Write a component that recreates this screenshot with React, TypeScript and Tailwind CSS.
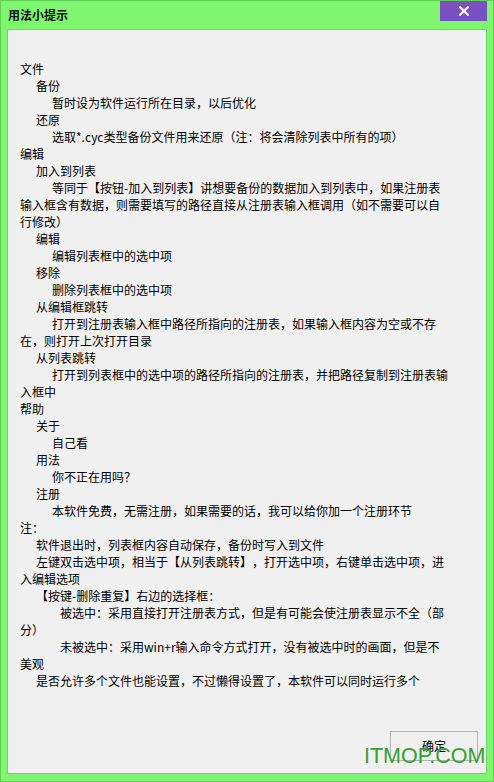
import React from "react";

type Line = { t: string; i: 0 | 1 | 2 | 3 };

const lines: Line[] = [
  { t: "文件", i: 0 },
  { t: "备份", i: 1 },
  { t: "暂时设为软件运行所在目录，以后优化", i: 2 },
  { t: "还原", i: 1 },
  { t: "选取*.cyc类型备份文件用来还原（注：将会清除列表中所有的项）", i: 2 },
  { t: "编辑", i: 0 },
  { t: "加入到列表", i: 1 },
  {
    t: "等同于【按钮-加入到列表】讲想要备份的数据加入到列表中，如果注册表输入框含有数据，则需要填写的路径直接从注册表输入框调用（如不需要可以自行修改）",
    i: 2,
  },
  { t: "编辑", i: 1 },
  { t: "编辑列表框中的选中项", i: 2 },
  { t: "移除", i: 1 },
  { t: "删除列表框中的选中项", i: 2 },
  { t: "从编辑框跳转", i: 1 },
  { t: "打开到注册表输入框中路径所指向的注册表，如果输入框内容为空或不存在，则打开上次打开目录", i: 2 },
  { t: "从列表跳转", i: 1 },
  { t: "打开到列表框中的选中项的路径所指向的注册表，并把路径复制到注册表输入框中", i: 2 },
  { t: "帮助", i: 0 },
  { t: "关于", i: 1 },
  { t: "自己看", i: 2 },
  { t: "用法", i: 1 },
  { t: "你不正在用吗？", i: 2 },
  { t: "注册", i: 1 },
  { t: "本软件免费，无需注册，如果需要的话，我可以给你加一个注册环节", i: 2 },
  { t: "注：", i: 0 },
  { t: "软件退出时，列表框内容自动保存，备份时写入到文件", i: 1 },
  { t: "左键双击选中项，相当于【从列表跳转】，打开选中项，右键单击选中项，进入编辑选项", i: 1 },
  { t: "【按键-删除重复】右边的选择框：", i: 1 },
  { t: "被选中：采用直接打开注册表方式，但是有可能会使注册表显示不全（部分）", i: 3 },
  { t: "未被选中：采用win+r输入命令方式打开，没有被选中时的画面，但是不美观", i: 3 },
  { t: "是否允许多个文件也能设置，不过懒得设置了，本软件可以同时运行多个", i: 1 },
];

const indentClass = ["indent-0", "indent-[16px]", "indent-[32px]", "indent-[40px]"];

export default function App() {
  return (
    <div
      className="relative flex h-[782px] w-[494px] flex-col overflow-hidden border border-[#62d056] bg-[#80f56f]"
      style={{ fontFamily: '"Noto Sans CJK SC", "Noto Sans", sans-serif' }}
    >
      {/* title bar */}
      <div className="flex h-[28px] shrink-0 items-start justify-between">
        <div className="flex h-[27px] items-center pl-[7px] text-[12px] font-bold leading-none text-[#111]">
          用法小提示
        </div>
        <div className="mr-[6px] flex h-[20px] w-[47px] items-center justify-center bg-[#7a51c3]">
          <svg width="10" height="10" viewBox="0 0 10 10">
            <path d="M1.2 1.2 L8.8 8.8 M8.8 1.2 L1.2 8.8" stroke="#ffffff" strokeWidth="2" strokeLinecap="square" />
          </svg>
        </div>
      </div>

      {/* content panel */}
      <div className="mb-[7px] ml-[6px] mr-[6px] flex flex-1 flex-col border border-[#70d465] bg-[#f0f0f0]">
        <div className="ml-[12px] mt-[30px] w-[430px] text-[12px] leading-[17px] text-[#000] [text-spacing-trim:space-all]">
          {lines.map((l, k) => (
            <div key={k} className={indentClass[l.i]}>
              {l.t}
            </div>
          ))}
        </div>
        <div className="mt-auto mb-[12px] mr-[8px] flex justify-end">
          <button className="flex h-[30px] w-[88px] items-center justify-center border border-[#b4b4b4] bg-[#efefef] text-[12px] text-[#000]">
            确定
          </button>
        </div>
      </div>

      {/* watermark */}
      <div
        className="absolute left-[363px] top-[745px] text-[21.5px] leading-none text-[#37a033]"
        style={{ fontFamily: '"Liberation Sans", Arial, sans-serif' }}
      >
        ITMOP.COM
      </div>
    </div>
  );
}
